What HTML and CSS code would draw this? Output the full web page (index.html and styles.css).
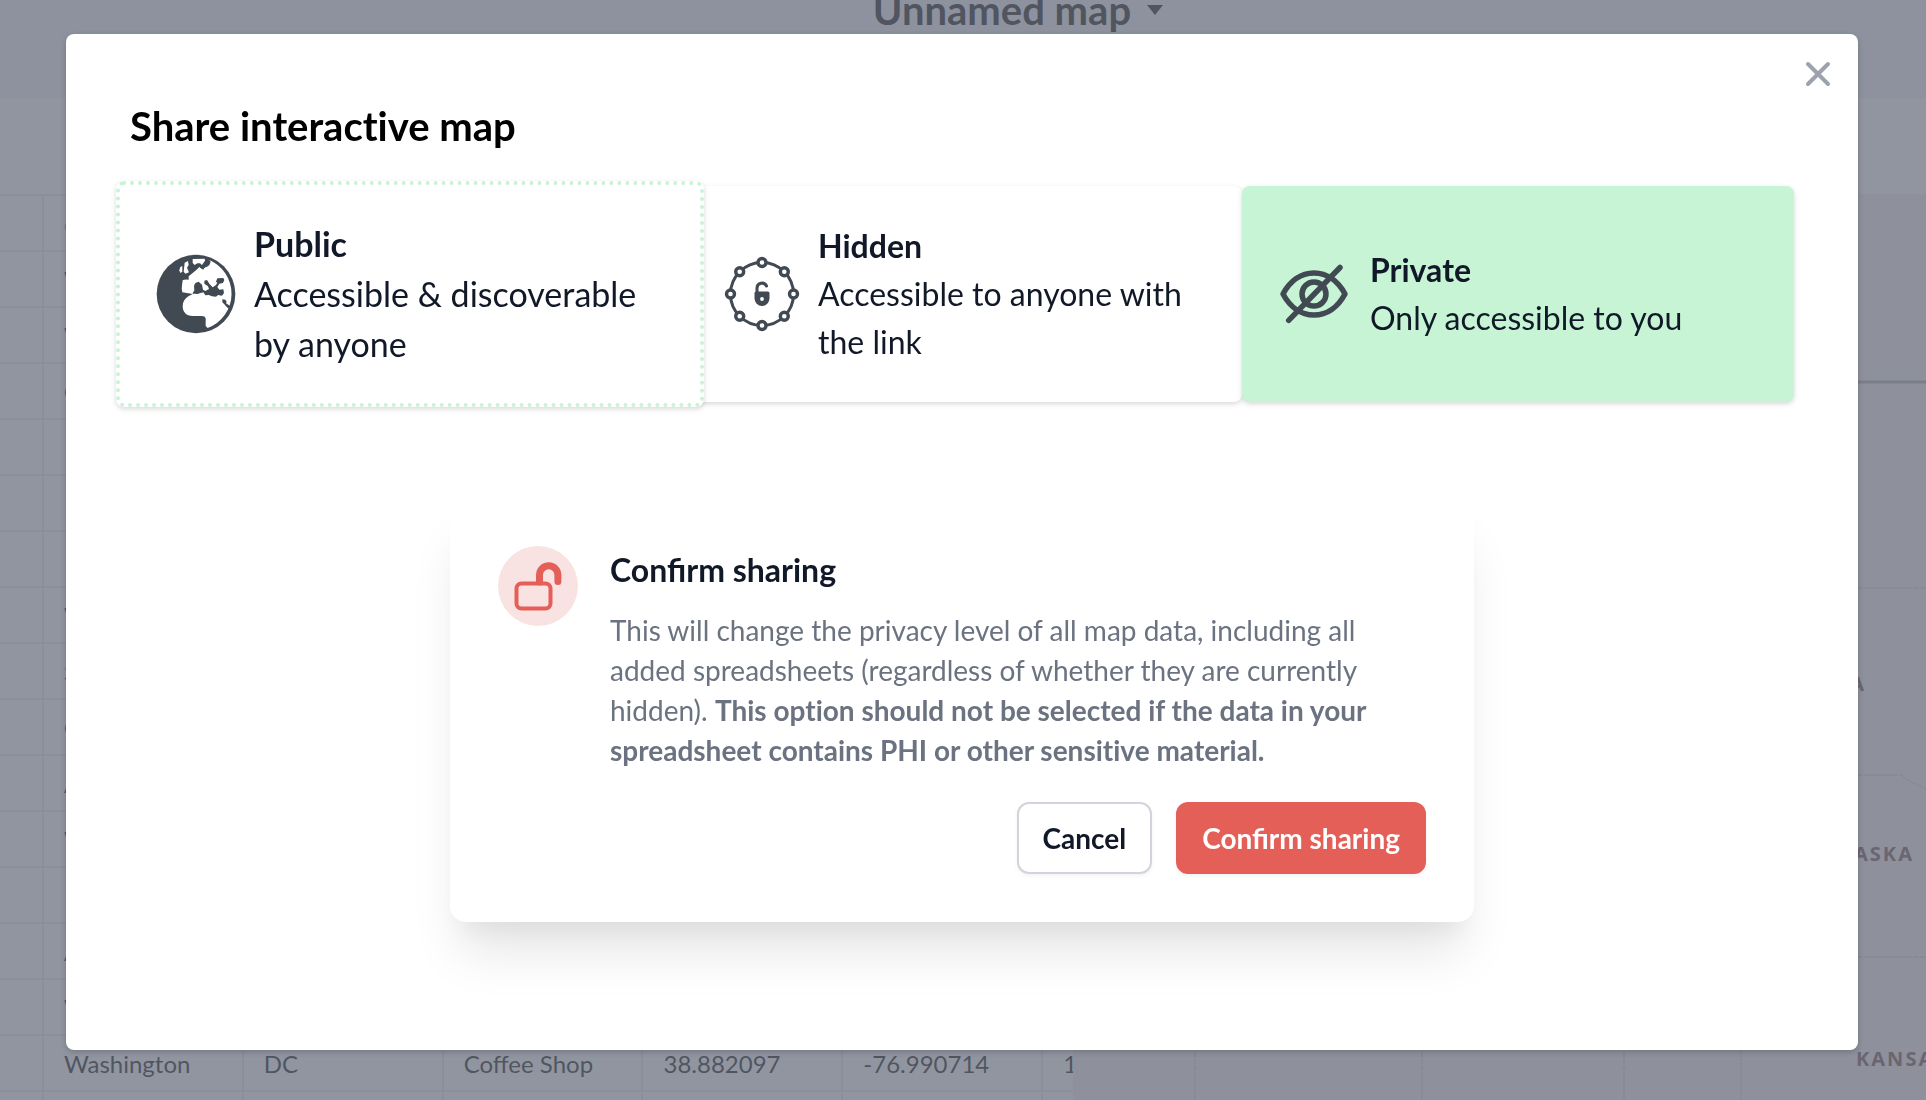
FILE: index.html
```html
<!DOCTYPE html>
<html lang="en">
<head>
  <meta charset="UTF-8">
  <meta name="viewport" content="width=device-width, initial-scale=1.0">
  <title>Share interactive map</title>
  <link rel="stylesheet" href="styles.css">
</head>
<body>
  <div class="app">
    <header class="topbar">
      <span class="map-name">Unnamed map</span>
      <svg class="caret" viewBox="0 0 16 10" aria-hidden="true"><path d="M0 0h16L8 10z"/></svg>
    </header>
    <div class="toolbar"></div>
    <main class="workspace">
      <div class="sheet">
        <table class="sheet-table">
          <tr><td></td><th>city</th><th></th><th></th><th></th><th></th><th></th></tr>
          <tr><td></td><td>Washington</td><td></td><td></td><td></td><td></td><td></td></tr>
          <tr><td></td><td>Washington</td><td></td><td></td><td></td><td></td><td></td></tr>
          <tr><td></td><td>Chicago</td><td></td><td></td><td></td><td></td><td></td></tr>
          <tr><td></td><td></td><td></td><td></td><td></td><td></td><td></td></tr>
          <tr><td></td><td></td><td></td><td></td><td></td><td></td><td></td></tr>
          <tr><td></td><td></td><td></td><td></td><td></td><td></td><td></td></tr>
          <tr><td></td><td>Washington</td><td></td><td></td><td></td><td></td><td></td></tr>
          <tr><td></td><td>Seattle</td><td></td><td></td><td></td><td></td><td></td></tr>
          <tr><td></td><td>Chicago</td><td></td><td></td><td></td><td></td><td></td></tr>
          <tr><td></td><td>Arlington</td><td></td><td></td><td></td><td></td><td></td></tr>
          <tr><td></td><td>Washington</td><td></td><td></td><td></td><td></td><td></td></tr>
          <tr><td></td><td></td><td></td><td></td><td></td><td></td><td></td></tr>
          <tr><td></td><td>Arlington</td><td></td><td></td><td></td><td></td><td></td></tr>
          <tr><td></td><td>Washington</td><td></td><td></td><td></td><td></td><td></td></tr>
          <tr><td></td><td>Washington</td><td>DC</td><td>Coffee Shop</td><td>38.882097</td><td>-76.990714</td><td>1</td></tr>
          <tr><td></td><td></td><td></td><td></td><td></td><td></td><td></td></tr>
        </table>
      </div>
      <div class="map">
        <svg class="map-canvas" width="853" height="906" viewBox="0 0 853 906">
          <path class="map-border" d="M0 188H853"/>
          <path class="map-state" d="M700 394H853M700 581H829L834 586L853 595M700 763H853M122 850V906M349 850V906M551 850V906M668 700V906"/>
          <text class="map-label" x="793" y="497" text-anchor="end">SOUTH DAKOTA</text>
          <text class="map-label" x="841" y="667" text-anchor="end">NEBRASKA</text>
          <text class="map-label" x="783" y="872">KANSAS</text>
        </svg>
      </div>
    </main>
  </div>

  <div class="overlay">
    <div class="modal" role="dialog" aria-labelledby="shareTitle">
      <button class="close-btn" aria-label="Close">
        <svg viewBox="0 0 28 28"><path d="M4 4L24 24M24 4L4 24"/></svg>
      </button>
      <h1 class="modal-title" id="shareTitle">Share interactive map</h1>

      <div class="options">
        <button class="option active">
          <svg class="option-icon" viewBox="42 65 252 252" aria-hidden="true">
            <circle cx="168" cy="191" r="118" fill="#414952"/>
            <g fill="#fff">
              <path d="M206 88A110 110 0 0 1 203 293L197 287L197 264Q195 257 186 257L160 257C140 258 128 246 128 228C128 215 134 205 145 198L158 191L127 186Q124 176 126 165L128 150Q134 146 146 148L146 138L158 128L168 120L178 110L188 116L198 110L208 104L212 94Z"/>
              <path d="M158 86L194 85L196 96L188 106L180 99L172 99L164 104L158 98Z"/>
              <path d="M134 97L144 92L146 104L141 112L147 126L136 130L131 124Z"/>
              <path d="M121 110L127 107L127 124L121 128L118 120Z"/>
            </g>
            <g fill="#414952">
              <path d="M157 190L163 180L162 166L166 158L176 154L186 163L189 178L196 182L207 176L204 168L193 160L193 151L201 149L208 160L218 171L227 165L232 158L228 154L232 144L250 143L253 149L249 158L238 160L232 170L238 178L250 177L252 188L246 196L234 194L228 199L216 198L206 194L196 195L190 186L172 191L163 190Z"/>
              <path d="M247 207L256 208L260 214L258 219L272 228L268 236L260 230L253 222L247 216Z"/>
              <path d="M196 90L206 86L210 96L204 108L194 110L190 118L180 112L186 104Z"/>
            </g>
          </svg>
          <span class="option-text"><strong>Public</strong><span>Accessible &amp; discoverable by anyone</span></span>
        </button>
        <button class="option">
          <svg class="option-icon" viewBox="0 0 80 80" aria-hidden="true">
            <g fill="none" stroke="#414952" stroke-width="3">
              <circle cx="40" cy="40" r="31.5"/>
              <path d="M35 39V34a5 5 0 0 1 9.500-2" stroke-linecap="round"/>
            </g>
            <g fill="#fff" stroke="#414952" stroke-width="3.400">
              <circle cx="40" cy="8.500" r="4"/><circle cx="62.300" cy="17.700" r="4"/>
              <circle cx="71.500" cy="40" r="4"/><circle cx="62.300" cy="62.300" r="4"/>
              <circle cx="40" cy="71.500" r="4"/><circle cx="17.700" cy="62.300" r="4"/>
              <circle cx="8.500" cy="40" r="4"/><circle cx="17.700" cy="17.700" r="4"/>
            </g>
            <path d="M34 37.500H46Q47.500 37.500 47.500 39V44.500a7.500 7.500 0 0 1-15 0V39Q32.500 37.500 34 37.500Z" fill="#414952"/>
            <circle cx="40" cy="45" r="1.900" fill="#fff"/>
          </svg>
          <span class="option-text"><strong>Hidden</strong><span>Accessible to anyone with the link</span></span>
        </button>
        <button class="option selected">
          <svg class="option-icon" viewBox="0 0 80 80" aria-hidden="true">
            <g fill="none" stroke="#414952" stroke-width="5.500" stroke-linecap="round" stroke-linejoin="round">
              <path d="M9 40C16 27 27 19 40 19S64 27 71 40C64 53 53 61 40 61S16 53 9 40Z"/>
              <circle cx="40" cy="40" r="12"/>
              <path d="M14.700 66.300L66 13.500"/>
            </g>
          </svg>
          <span class="option-text"><strong>Private</strong><span>Only accessible to you</span></span>
        </button>
      </div>

      <section class="confirm">
        <div class="confirm-body">
          <div class="confirm-icon">
            <svg viewBox="0 0 80 80" aria-hidden="true">
              <g fill="none" stroke="#e55f59" stroke-linecap="round">
                <rect x="18.500" y="37.500" width="34" height="25" rx="5" stroke-width="4"/>
                <path d="M41.500 36V29a9.200 9.200 0 0 1 18.400 0V35.500" stroke-width="7"/>
              </g>
            </svg>
          </div>
          <div class="confirm-text">
            <h2>Confirm sharing</h2>
            <p>This will change the privacy level of all map data, including all added spreadsheets (regardless of whether they are currently hidden). <strong>This option should not be selected if the data in your spreadsheet contains PHI or other sensitive material.</strong></p>
          </div>
        </div>
        <div class="confirm-actions">
          <button class="btn">Cancel</button>
          <button class="btn btn-danger">Confirm sharing</button>
        </div>
      </section>
    </div>
  </div>
</body>
</html>
```

FILE: styles.css
```css
* {
  box-sizing: border-box;
}

body {
  margin: 0;
  height: 100vh;
  overflow: hidden;
  font-family: Lato, "Liberation Sans", sans-serif;
  color: #111827;
  background: #fff;
}

button {
  font-family: inherit;
  color: inherit;
  cursor: pointer;
}

/* Page behind the dialog */
.app {
  height: 100vh;
  display: flex;
  flex-direction: column;
  overflow: hidden;
}

.topbar {
  flex: none;
  height: 98px;
  display: flex;
  justify-content: center;
  align-items: flex-start;
  gap: 16px;
  padding-left: 110px;
  background: #f3f4f6;
  color: #000;
}

.map-name {
  margin-top: -14px;
  font-size: 40px;
  line-height: 48px;
  font-weight: 700;
}

.caret {
  width: 16px;
  height: 10px;
  margin-top: 5px;
}

.toolbar {
  flex: none;
  height: 96px;
}

.workspace {
  flex: 1;
  min-height: 0;
  display: flex;
}

.sheet {
  flex: none;
  width: 1073px;
  overflow: hidden;
}

.sheet-table {
  width: 1243px;
  table-layout: fixed;
  border-collapse: collapse;
  font-size: 24px;
  color: #000;
}

.sheet-table th,
.sheet-table td {
  height: 56px;
  padding: 0 20px;
  border: 2px solid #e5e7eb;
  border-left: 0;
  text-align: left;
  font-weight: 400;
}

.sheet-table th {
  color: #6b7280;
}

.sheet-table tr > :first-child {
  width: 43px;
}

.map {
  flex: 1;
  min-width: 0;
  overflow: hidden;
  background: #f6ecee;
}

.map-canvas {
  display: block;
}

.map-border {
  stroke: #a9a4ac;
  stroke-width: 3;
}

.map-state {
  fill: none;
  stroke: #c4bcc4;
  stroke-width: 1;
  stroke-dasharray: 6 1;
}

.map-label {
  font-family: "Noto Sans", "Open Sans", sans-serif;
  font-size: 20px;
  font-weight: 700;
  letter-spacing: 2px;
  fill: #6c4248;
}

/* Dialog */
.overlay {
  position: fixed;
  inset: 0;
  padding: 34px 68px 50px 66px;
  display: flex;
  background: rgba(107, 114, 128, 0.75);
}

.modal {
  flex: 1;
  display: flex;
  flex-direction: column;
  position: relative;
  padding: 68px 64px 64px;
  border-radius: 8px;
  background: #fff;
  box-shadow: 0 2px 6px rgba(0, 0, 0, 0.2);
}

.close-btn {
  position: absolute;
  top: 26px;
  right: 26px;
  width: 28px;
  height: 28px;
  padding: 0;
  border: none;
  background: none;
}

.close-btn svg {
  display: block;
  fill: none;
  stroke: #9ca3af;
  stroke-width: 4;
  stroke-linecap: round;
}

.modal-title {
  margin: 0 0 36px;
  color: #000;
  font-size: 40px;
  line-height: 48px;
  font-weight: 700;
  font-variant-ligatures: none;
}

.options {
  display: flex;
}

.option {
  flex: 1 1 0;
  min-height: 216px;
  display: flex;
  align-items: center;
  gap: 16px;
  padding: 32px;
  border: none;
  border-radius: 8px;
  background: #fff;
  font-size: 32px;
  line-height: 48px;
  text-align: left;
  box-shadow: 0 2px 6px rgba(0, 0, 0, 0.1), 0 2px 4px rgba(0, 0, 0, 0.06);
}

/* Hovered card grows past its neighbours */
.option.active {
  position: relative;
  z-index: 1;
  margin: -5px -14px;
  padding: 34px 58px 34px 34px;
  border: 4px dotted #c6f4d5;
  font-size: 34px;
  line-height: 50px;
}

.option.selected {
  background: #c6f4d5;
}

.option-icon {
  flex: none;
  width: 80px;
  height: 80px;
}

.option.active .option-icon {
  width: 84px;
  height: 84px;
}

.option-text {
  display: flex;
  flex-direction: column;
}

/* Confirmation panel */
.confirm {
  width: 100%;
  max-width: 1024px;
  margin: 96px auto 0;
  padding: 48px;
  border-radius: 16px;
  background: #fff;
  box-shadow: 0 40px 50px -10px rgba(0, 0, 0, 0.1), 0 20px 20px -10px rgba(0, 0, 0, 0.04);
}

.confirm-body {
  display: flex;
  gap: 32px;
}

.confirm-icon {
  flex: none;
  width: 80px;
  height: 80px;
  border-radius: 50%;
  background: #f8e3e2;
}

.confirm-text h2 {
  margin: 0 0 16px;
  font-size: 32px;
  line-height: 48px;
  font-weight: 700;
}

.confirm-text p {
  margin: 0;
  font-size: 28px;
  line-height: 40px;
  color: #6b7280;
}

.confirm-text strong {
  font-variant-ligatures: none;
}

.confirm-actions {
  display: flex;
  justify-content: flex-end;
  gap: 24px;
  margin-top: 32px;
}

.btn {
  height: 72px;
  padding: 0 24px;
  border: 2px solid #d1d5db;
  border-radius: 12px;
  background: #fff;
  font-size: 28px;
  line-height: 40px;
  font-weight: 700;
  box-shadow: 0 2px 4px rgba(0, 0, 0, 0.05);
}

.btn-danger {
  border-color: #e55f59;
  background: #e55f59;
  color: #fff;
}
```
